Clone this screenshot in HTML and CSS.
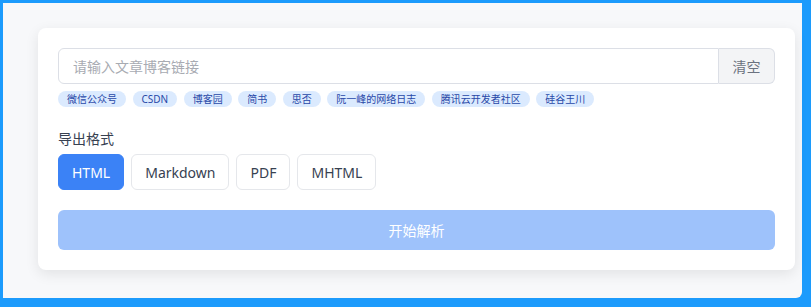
FILE: index.html
```html
<!DOCTYPE html>
<html lang="zh-CN">
<head>
<meta charset="utf-8">
<title>文章导出</title>
<link rel="stylesheet" href="styles.css">
</head>
<body>
<div class="frame">
  <div class="card">
    <div class="url-row">
      <input class="url-input" type="text" placeholder="请输入文章博客链接">
      <button class="clear-btn">清空</button>
    </div>
    <div class="tags">
      <span class="tag">微信公众号</span>
      <span class="tag">CSDN</span>
      <span class="tag">博客园</span>
      <span class="tag">简书</span>
      <span class="tag">思否</span>
      <span class="tag">阮一峰的网络日志</span>
      <span class="tag">腾讯云开发者社区</span>
      <span class="tag">硅谷王川</span>
    </div>
    <div class="label">导出格式</div>
    <div class="formats">
      <button class="fmt active">HTML</button>
      <button class="fmt">Markdown</button>
      <button class="fmt">PDF</button>
      <button class="fmt">MHTML</button>
    </div>
    <button class="start-btn">开始解析</button>
  </div>
</div>
</body>
</html>
```

FILE: styles.css
```css
* { box-sizing: border-box; }
html, body {
  margin: 0;
  padding: 0;
}
body {
  background: #1c9bfc;
  height: 307px;
  overflow: hidden;
  font-family: "Noto Sans", "Noto Sans CJK SC", sans-serif;
}
.frame {
  margin: 3px 9px 0 3px;
  height: 295px;
  background: #f7f8fa;
  border-bottom-right-radius: 6px;
  padding: 25px 7px 0 35px;
}
.card {
  background: #ffffff;
  border-radius: 8px;
  box-shadow: 0 4px 14px rgba(0, 0, 0, 0.09);
  padding: 20px;
}
.url-row {
  display: flex;
  height: 36px;
}
.url-input {
  flex: 1;
  min-width: 0;
  height: 36px;
  border: 1px solid #dcdfe6;
  border-radius: 6px 0 0 6px;
  padding: 0 14px;
  font-family: inherit;
  font-size: 14px;
  color: #374151;
  outline: none;
}
.url-input::placeholder {
  color: #a8abb2;
}
.clear-btn {
  width: 56px;
  height: 36px;
  border: 1px solid #dcdfe6;
  border-left: 0;
  border-radius: 0 6px 6px 0;
  background: #f3f4f6;
  color: #6b7280;
  font-family: inherit;
  font-size: 14px;
  padding: 0;
}
.tags {
  display: flex;
  flex-wrap: wrap;
  gap: 6.5px;
  margin-top: 7px;
}
.tag {
  height: 16px;
  line-height: 16px;
  padding: 0 9px;
  border-radius: 8px;
  background: #dbeafe;
  color: #2848a8;
  font-size: 10px;
}
.label {
  margin-top: 22px;
  font-size: 14px;
  line-height: 20px;
  color: #374151;
}
.formats {
  display: flex;
  gap: 7px;
  margin-top: 5px;
}
.fmt {
  height: 36px;
  padding: 0 13px;
  border: 1px solid #e5e7eb;
  border-radius: 6px;
  background: #ffffff;
  color: #374151;
  font-family: inherit;
  font-size: 14px;
}
.fmt.active {
  background: #3b82f6;
  border-color: #3b82f6;
  color: #ffffff;
}
.start-btn {
  display: block;
  width: 100%;
  height: 40px;
  margin-top: 20px;
  border: 0;
  border-radius: 6px;
  background: #9ec2fb;
  color: #ffffff;
  font-family: inherit;
  font-size: 14px;
}
```
